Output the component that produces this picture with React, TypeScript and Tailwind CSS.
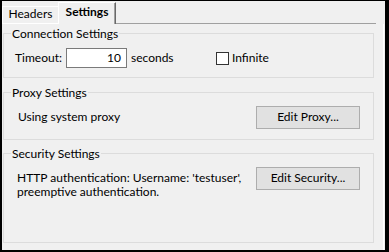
export default function App() {
  return (
    <div className="w-[389px] h-[252px] bg-[#f0f0f0] border-black border-t border-l-2 border-b-2 border-r-4 text-[12px] leading-[14px] text-black flex flex-col font-[Lato,'Noto_Sans',sans-serif]">
      {/* tab strip */}
      <div className="flex items-end h-[23px]">
        <div className="w-[56px] h-[18px] border-t border-l border-b border-white flex justify-center">
          <span>Headers</span>
        </div>
        <div className="w-[58px] h-[22px] border-t border-l border-white border-r border-r-[#696969] shadow-[inset_-1px_0_#a0a0a0] flex justify-center pt-[2px] font-bold">
          <span>Settings</span>
        </div>
        <div className="flex-1 h-px bg-[#a0a0a0] mr-[9px]" />
      </div>

      {/* panel */}
      <div className="flex-1 mr-[1px] border-r border-white flex flex-col">
        <fieldset className="ml-[1px] w-[371px] h-[52px] mt-[2px] border border-[#dcdcdc]">
          <legend className="ml-[7px] px-[1px] leading-[15px]">Connection Settings</legend>
          <div className="flex items-center mt-[7px] pl-[11px]">
            <span className="w-[51px]">Timeout:</span>
            <div className="w-[61px] h-[20px] border border-[#7a7a7a] bg-white text-right pr-[5px] leading-[18px]">10</div>
            <span className="ml-[4px] w-[85px]">seconds</span>
            <div className="w-[13px] h-[13px] border border-[#333333] bg-white" />
            <span className="ml-[3px]">Infinite</span>
          </div>
        </fieldset>

        <fieldset className="ml-[1px] w-[371px] h-[55px] mt-[7px] border border-[#dcdcdc]">
          <legend className="ml-[7px] px-[1px] leading-[15px]">Proxy Settings</legend>
          <div className="flex items-baseline mt-[6px] pl-[14px]">
            <span>Using system proxy</span>
            <button className="ml-auto mr-[13px] w-[104px] h-[23px] border border-[#adadad] bg-[#e1e1e1] flex items-center justify-center pb-[2px]">
              Edit Proxy...
            </button>
          </div>
        </fieldset>

        <fieldset className="ml-[1px] w-[371px] h-[97px] mt-[6px] border border-[#dcdcdc]">
          <legend className="ml-[7px] px-[1px] leading-[15px]">Security Settings</legend>
          <div className="flex items-baseline mt-[6px] pl-[13px]">
            <div className="flex flex-col">
              <span>HTTP authentication: Username: 'testuser',</span>
              <span>preemptive authentication.</span>
            </div>
            <button className="ml-auto mr-[13px] w-[104px] h-[23px] border border-[#adadad] bg-[#e1e1e1] flex items-center justify-center pb-[2px]">
              Edit Security...
            </button>
          </div>
        </fieldset>
      </div>
    </div>
  );
}
